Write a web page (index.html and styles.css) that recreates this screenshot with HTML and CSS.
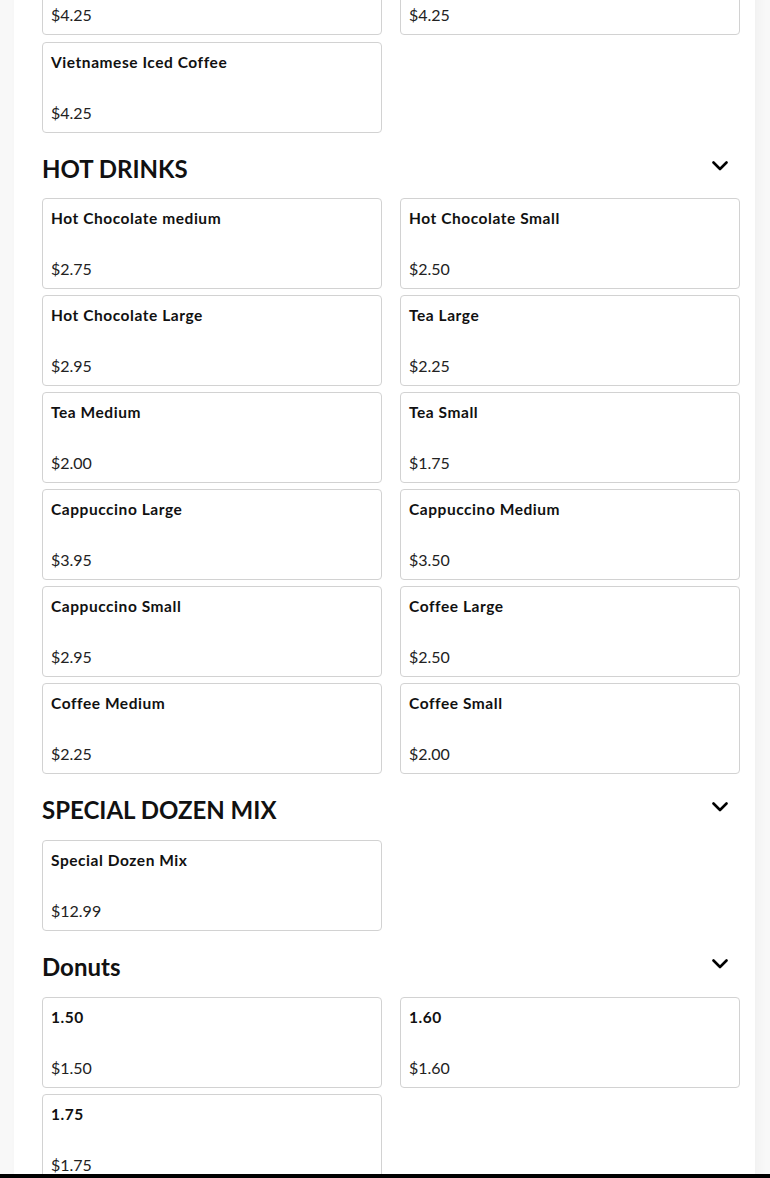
FILE: index.html
```html
<!DOCTYPE html>
<html lang="en">
<head>
<meta charset="utf-8">
<title>Menu</title>
<link rel="stylesheet" href="styles.css">
</head>
<body>
<main class="page">
  <section class="section section-scrolled">
    <div class="grid grid-scrolled">
      <div class="card"><div class="card-title">Iced Coffee</div><div class="card-price">$4.25</div></div>
      <div class="card"><div class="card-title">Iced Latte</div><div class="card-price">$4.25</div></div>
      <div class="card"><div class="card-title">Vietnamese Iced Coffee</div><div class="card-price">$4.25</div></div>
    </div>
  </section>

  <section class="section">
    <div class="section-head section-head-tight">
      <h2 class="section-title">HOT DRINKS</h2>
      <svg class="chevron" viewBox="0 0 16 10" width="16" height="10"><path d="M1.5 1.5 L8 8 L14.5 1.5" fill="none" stroke="#000" stroke-width="2.6" stroke-linecap="round" stroke-linejoin="round"/></svg>
    </div>
    <div class="grid">
      <div class="card"><div class="card-title">Hot Chocolate medium</div><div class="card-price">$2.75</div></div>
      <div class="card"><div class="card-title">Hot Chocolate Small</div><div class="card-price">$2.50</div></div>
      <div class="card"><div class="card-title">Hot Chocolate Large</div><div class="card-price">$2.95</div></div>
      <div class="card"><div class="card-title">Tea Large</div><div class="card-price">$2.25</div></div>
      <div class="card"><div class="card-title">Tea Medium</div><div class="card-price">$2.00</div></div>
      <div class="card"><div class="card-title">Tea Small</div><div class="card-price">$1.75</div></div>
      <div class="card"><div class="card-title">Cappuccino Large</div><div class="card-price">$3.95</div></div>
      <div class="card"><div class="card-title">Cappuccino Medium</div><div class="card-price">$3.50</div></div>
      <div class="card"><div class="card-title">Cappuccino Small</div><div class="card-price">$2.95</div></div>
      <div class="card"><div class="card-title">Coffee Large</div><div class="card-price">$2.50</div></div>
      <div class="card"><div class="card-title">Coffee Medium</div><div class="card-price">$2.25</div></div>
      <div class="card"><div class="card-title">Coffee Small</div><div class="card-price">$2.00</div></div>
    </div>
  </section>

  <section class="section">
    <div class="section-head">
      <h2 class="section-title">SPECIAL DOZEN MIX</h2>
      <svg class="chevron" viewBox="0 0 16 10" width="16" height="10"><path d="M1.5 1.5 L8 8 L14.5 1.5" fill="none" stroke="#000" stroke-width="2.6" stroke-linecap="round" stroke-linejoin="round"/></svg>
    </div>
    <div class="grid">
      <div class="card"><div class="card-title">Special Dozen Mix</div><div class="card-price">$12.99</div></div>
    </div>
  </section>

  <section class="section">
    <div class="section-head">
      <h2 class="section-title">Donuts</h2>
      <svg class="chevron" viewBox="0 0 16 10" width="16" height="10"><path d="M1.5 1.5 L8 8 L14.5 1.5" fill="none" stroke="#000" stroke-width="2.6" stroke-linecap="round" stroke-linejoin="round"/></svg>
    </div>
    <div class="grid">
      <div class="card"><div class="card-title">1.50</div><div class="card-price">$1.50</div></div>
      <div class="card"><div class="card-title">1.60</div><div class="card-price">$1.60</div></div>
      <div class="card"><div class="card-title">1.75</div><div class="card-price">$1.75</div></div>
    </div>
  </section>
</main>
<div class="bottom-bar"></div>
</body>
</html>
```

FILE: styles.css
```css
html, body {
  margin: 0;
  padding: 0;
}
body {
  background: #f8f8f8;
  font-family: Lato, "Noto Sans", sans-serif;
  color: #111;
  overflow: hidden;
  height: 1178px;
}
.page {
  margin-left: 14px;
  width: 741px;
  min-height: 1300px;
  background: #fff;
  box-shadow: 4px 0 10px rgba(0, 0, 0, 0.03);
  padding: 0 15px 0 28px;
  box-sizing: border-box;
}
.grid {
  display: grid;
  grid-template-columns: 340px 340px;
  column-gap: 18px;
  row-gap: 6px;
}
.grid-scrolled {
  margin-top: -56px;
  row-gap: 7px;
}
.card {
  height: 91px;
  box-sizing: border-box;
  border: 1px solid #d2d2d2;
  border-radius: 4px;
  padding: 9px 8px 9px;
  display: flex;
  flex-direction: column;
  justify-content: space-between;
}
.card-title {
  font-size: 15.5px;
  font-weight: 700;
  line-height: 20px;
  letter-spacing: 0.55px;
  color: #111;
}
.card-price {
  font-size: 16px;
  font-weight: 400;
  line-height: 20px;
  color: #222;
}
.section-head {
  display: flex;
  align-items: center;
  justify-content: space-between;
  margin: 20px 0 14px 0;
  height: 32px;
}
.section-head-tight {
  margin-bottom: 13px;
}
.section-title {
  margin: 0;
  font-size: 24px;
  font-weight: 700;
  line-height: 32px;
  color: #111;
}
.chevron {
  margin-right: 12px;
  margin-top: -6px;
}
.bottom-bar {
  position: fixed;
  left: 0;
  right: 0;
  bottom: 0;
  height: 4px;
  background: #000;
}
```
